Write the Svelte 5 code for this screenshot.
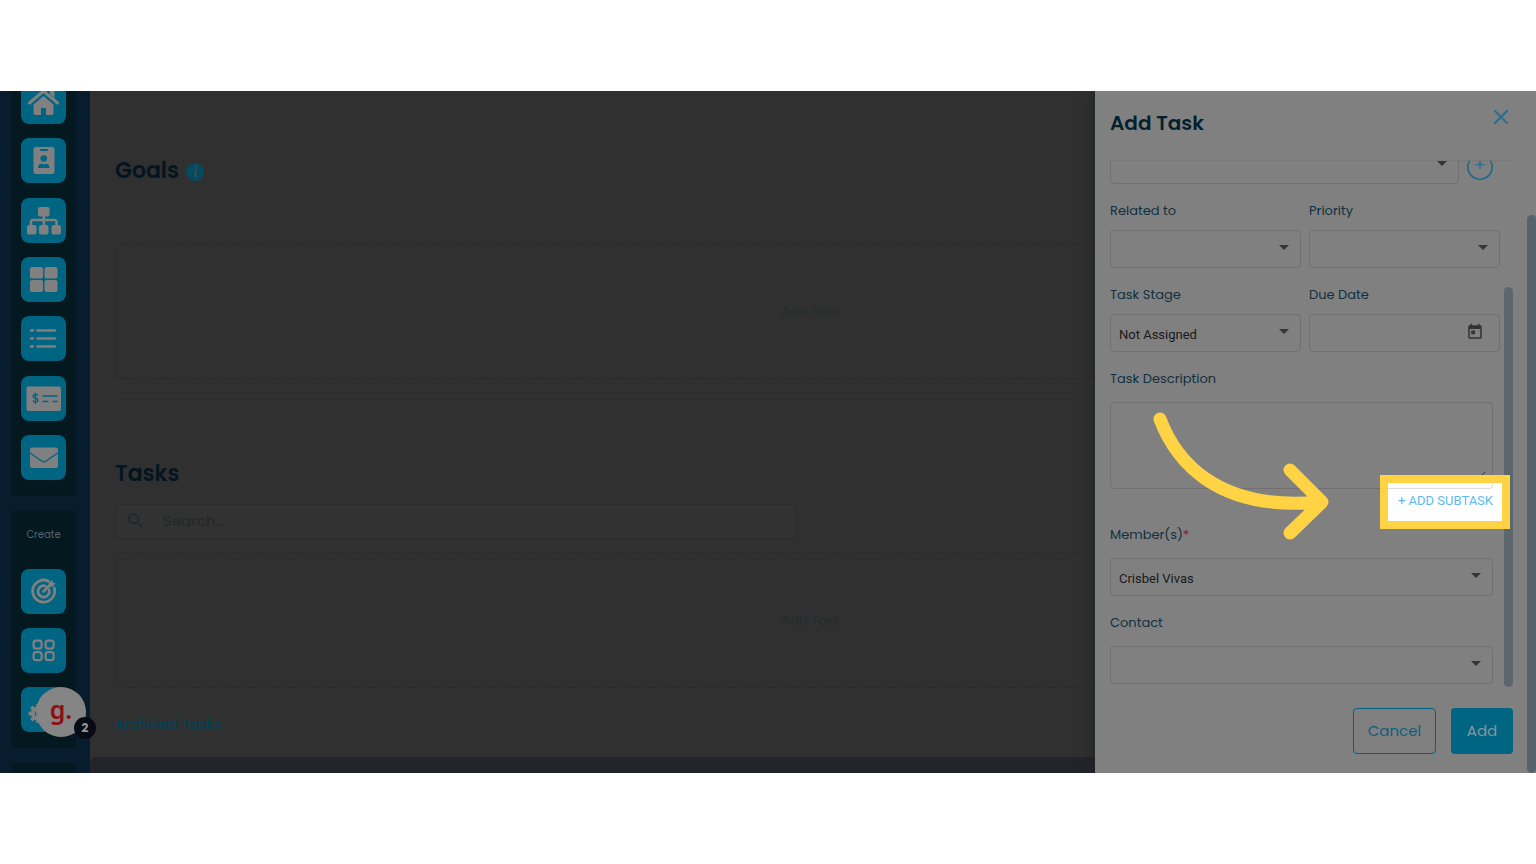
<script>
  const browse = ['home', 'badge', 'sitemap', 'grid', 'list', 'check', 'mail'];
  const create = ['target', 'apps', 'gear'];
  let stage = $state('Not Assigned');
  let member = $state('Crisbel Vivas');
</script>

{#snippet icon(name)}
  <svg viewBox="0 0 45 45" aria-hidden="true">
    {#if name === 'home'}
      <path d="M8.500 24 L22.500 12 L36.500 24" fill="none" stroke="currentColor" stroke-width="3" stroke-linecap="round" />
      <path d="M29 10h4.500v9L29 15z" fill="currentColor" />
      <path d="M12.500 25.500 22.500 17 32.500 25.500V34a2 2 0 0 1-2 2H25v-7h-5v7h-5.500a2 2 0 0 1-2-2z" fill="currentColor" />
    {:else if name === 'badge'}
      <rect x="12.500" y="9" width="21" height="27" rx="2" fill="currentColor" />
      <rect x="19" y="11" width="8" height="2" rx="1" fill="var(--tile)" />
      <circle cx="22.800" cy="20.500" r="3.300" fill="var(--tile)" />
      <path d="M17 30c0-4 3-5 5.800-3.500C25.600 25 28.500 26 28.500 30z" fill="var(--tile)" />
    {:else if name === 'sitemap'}
      <g fill="currentColor">
        <rect x="17" y="9" width="11.500" height="9.500" rx="2" />
        <rect x="6" y="27" width="9.500" height="9.500" rx="2" />
        <rect x="18" y="27" width="9.500" height="9.500" rx="2" />
        <rect x="30.500" y="27" width="9.500" height="9.500" rx="2" />
      </g>
      <path d="M10 27v-3q0-2 2-2h21.500q2 0 2 2v3M22.800 18v9" fill="none" stroke="currentColor" stroke-width="2.500" />
    {:else if name === 'grid'}
      <g fill="currentColor">
        <rect x="9" y="10" width="13" height="11.500" rx="2" />
        <rect x="23.500" y="10" width="13" height="11.500" rx="2" />
        <rect x="9" y="23" width="13" height="12" rx="2" />
        <rect x="23.500" y="23" width="13" height="12" rx="2" />
      </g>
    {:else if name === 'list'}
      <path d="M10 14.500h2M10 22.500h2M10 30.500h2M16.500 14.500h17.500M16.500 22.500h17.500M16.500 30.500h17.500" stroke="currentColor" stroke-width="2.600" stroke-linecap="round" />
    {:else if name === 'check'}
      <rect x="5.500" y="10.500" width="34.500" height="24.500" rx="2" fill="currentColor" />
      <path d="M17 19.500c-1-1.500-5-1.600-5 .7 0 2.600 5 1.400 5 4 0 2.200-4 2.200-5.200.4M14.400 16.500v11.500" fill="none" stroke="var(--tile)" stroke-width="1.300" />
      <path d="M21.500 20h15M21.500 25.500h6M31.500 25.500h5" stroke="var(--tile)" stroke-width="1.700" />
    {:else if name === 'mail'}
      <rect x="9" y="12.500" width="28" height="20.500" rx="2" fill="currentColor" />
      <path d="M8.500 17.500 20.500 26q2.300 1.600 4.600 0L37.500 17.500" fill="none" stroke="var(--tile)" stroke-width="1.500" />
    {:else if name === 'target'}
      <g fill="none" stroke="currentColor" stroke-width="2.800" stroke-linecap="round">
        <path d="M27.500 12.200A11 11 0 1 0 33.200 19" />
        <path d="M24.500 17A5.700 5.700 0 1 0 28.200 21" />
        <path d="M22.500 22.500 30 15" />
      </g>
      <path d="M27.500 14.500 31 11l1 2.500 2.800 1L31 18l-3-.5z" fill="currentColor" />
    {:else if name === 'apps'}
      <g fill="none" stroke="currentColor" stroke-width="2.200">
        <rect x="12.600" y="12.600" width="8" height="8" rx="2.500" />
        <rect x="24.600" y="12.600" width="8" height="8" rx="2.500" />
        <rect x="12.600" y="24.200" width="8" height="8" rx="2.500" />
        <rect x="24.600" y="24.200" width="8" height="8" rx="2.500" />
      </g>
    {:else}
      <circle cx="17" cy="26.500" r="5" fill="none" stroke="currentColor" stroke-width="4.500" />
      <path d="M17 17v19M7.500 26.500h19M10.300 19.800l13.400 13.400M23.700 19.800 10.300 33.200" stroke="currentColor" stroke-width="3.600" />
      <circle cx="17" cy="26.500" r="3" fill="var(--tile)" />
    {/if}
  </svg>
{/snippet}

{#snippet caret()}
  <svg class="caret" viewBox="0 0 10 5" aria-hidden="true"><path d="M0 0h10L5 5z" fill="#353535" /></svg>
{/snippet}

<div class="page">
  <div class="frame">
    <nav class="sidebar" aria-label="Main navigation">
      <div class="panel browse">
        <div class="tiles spread">
          {#each browse as name}
            <button class="tile" aria-label={name}>{@render icon(name)}</button>
          {/each}
        </div>
      </div>
      <div class="panel create">
        <span class="caption">Create</span>
        <div class="tiles">
          {#each create as name}
            <button class="tile" aria-label={name}>{@render icon(name)}</button>
          {/each}
        </div>
        <button class="helper"><span>g.</span><b>2</b></button>
      </div>
      <div class="panel rest"></div>
    </nav>

    <main>
      <section class="goals">
        <h2>Goals <i class="info">i</i></h2>
        <button class="drop">Add Goal</button>
      </section>
      <section class="tasks">
        <h2>Tasks</h2>
        <label class="search">
          <svg viewBox="0 0 16 16" aria-hidden="true"><path d="M10 10l5 5M11 6A5 5 0 1 1 1 6a5 5 0 0 1 10 0z" fill="none" stroke="currentColor" stroke-width="2" /></svg>
          <input type="text" placeholder="Search..." aria-label="Search tasks" />
        </label>
        <button class="drop">Add Task</button>
        <a href="#archived">Archived Tasks</a>
      </section>
      <footer></footer>
    </main>

    <aside class="drawer">
      <header>
        <h1>Add Task</h1>
        <button class="close" aria-label="Close">
          <svg viewBox="0 0 14 14"><path d="M0 0l14 14M14 0L0 14" stroke="currentColor" stroke-width="2" /></svg>
        </button>
      </header>

      <form>
        <div class="row">
          <div class="control"><select aria-label="Goal"><option></option></select>{@render caret()}</div>
          <button type="button" class="plus" aria-label="Add goal">
            <svg viewBox="0 0 26 26"><circle cx="13" cy="13" r="12.200" fill="none" stroke="#176985" stroke-width="1.500" /><path d="M13 6v9M8.500 10.500h9" stroke="currentColor" stroke-width="1.500" /></svg>
          </button>
        </div>
        <div class="pair">
          <div class="field">
            <label for="related">Related to</label>
            <div class="control"><select id="related"><option></option></select>{@render caret()}</div>
          </div>
          <div class="field">
            <label for="priority">Priority</label>
            <div class="control"><select id="priority"><option></option></select>{@render caret()}</div>
          </div>
          <div class="field">
            <label for="stage">Task Stage</label>
            <div class="control"><select id="stage" bind:value={stage}><option>Not Assigned</option></select>{@render caret()}</div>
          </div>
          <div class="field">
            <label for="due">Due Date</label>
            <div class="control">
              <input id="due" type="text" />
              <svg class="calendar" viewBox="0 0 24 24" aria-hidden="true"><path d="M19 3h-1V1h-2v2H8V1H6v2H5c-1.100 0-2 .9-2 2v14c0 1.100.9 2 2 2h14c1.100 0 2-.9 2-2V5c0-1.100-.9-2-2-2zm0 16H5V8h14v11zM7 10h5v5H7z" fill="currentColor" /></svg>
            </div>
          </div>
        </div>
        <div class="field wide">
          <label for="description">Task Description</label>
          <div class="control">
            <textarea id="description"></textarea>
            <svg class="grip" viewBox="0 0 14 14" aria-hidden="true"><path d="M12 0 0 12" stroke="#333" /></svg>
          </div>
        </div>
        <div class="subtask">
          <div class="spotlight"><span></span></div>
          <button type="button">+ ADD SUBTASK</button>
        </div>
        <div class="field wide">
          <label for="members">Member(s)<em>*</em></label>
          <div class="control"><select id="members" bind:value={member}><option>Crisbel Vivas</option></select>{@render caret()}</div>
        </div>
        <div class="field wide">
          <label for="contact">Contact</label>
          <div class="control"><select id="contact"><option></option></select>{@render caret()}</div>
        </div>
        <span class="thumb inner"></span>
      </form>

      <div class="actions">
        <button class="cancel">Cancel</button>
        <button class="add">Add</button>
      </div>

      <span class="thumb outer"></span>
      <svg class="arrow" viewBox="0 0 182 134" aria-hidden="true">
        <path d="M10 11C25 51 65 104 170 94M140 62l32 32-32 31" fill="none" stroke="#ffd344" stroke-width="13" stroke-linecap="round" stroke-linejoin="round" />
      </svg>
    </aside>
  </div>
</div>

<style>
  :global(body) { margin: 0; background: #fff; }
  * { box-sizing: border-box; }
  button, input, select, textarea { font: inherit; color: inherit; margin: 0; }
  button { padding: 0; border: 0; background: none; cursor: pointer; }
  svg { display: block; }

  .page {
    min-height: 100vh;
    padding: 91px 0;
    font-family: Poppins, Inter, sans-serif;
    font-size: 13px;
  }
  .frame {
    position: relative;
    display: flex;
    height: calc(100vh - 182px);
    min-height: 682px;
    overflow: hidden;
    background: #303030;
  }

  .sidebar {
    display: flex;
    flex-direction: column;
    gap: 15px;
    width: 90px;
    flex: none;
    padding: 0 14px 0 11px;
    background: #071d2d;
  }
  .panel { background: #04181f; padding: 0 10px; flex: none; }
  .browse { display: flow-root; height: 405px; }
  .create { position: relative; height: 237px; }
  .rest { flex: 1; }
  .tiles { display: flex; flex-direction: column; gap: 14px; }
  .spread { height: 401px; margin-top: -12px; justify-content: space-between; gap: 0; }
  .tile {
    --tile: #006483;
    width: 45px;
    height: 45px;
    border-radius: 8px;
    background: var(--tile);
    color: #808080;
  }
  .caption { display: block; padding: 14px 0 24px; line-height: 20px; font-size: 10px; text-align: center; color: #58656b; }
  .helper {
    position: absolute;
    left: 25px;
    top: 176px;
    width: 50px;
    height: 50px;
    border-radius: 50%;
    background: #858585;
    color: #900d16;
    font: 600 25px/44px "Noto Sans", sans-serif;
  }
  .helper span { display: block; height: 50px; }
  .helper b {
    position: absolute;
    left: 38px;
    top: 30px;
    width: 22px;
    height: 22px;
    border-radius: 50%;
    background: #070b16;
    color: #969696;
    font: 700 12px/22px Poppins, Inter, sans-serif;
  }

  main { flex: 1; display: flex; flex-direction: column; }
  section { padding: 0 29px 0 25px; }
  h2 { margin: 0; font-size: 22px; line-height: 32px; font-weight: 600; color: #03151f; }
  .goals { padding-top: 64px; height: 303px; }
  .goals::after { content: ""; display: block; margin-top: 14px; border-top: 1px solid #2b2c30; }
  .goals .drop { margin-top: 57px; }
  .tasks { padding-top: 64px; height: 363px; }
  .info {
    display: inline-block;
    width: 18px;
    height: 18px;
    margin-left: 2px;
    border-radius: 50%;
    background: #034b60;
    color: #3c4a4e;
    font: italic 700 16px/18px "Liberation Serif", serif;
    text-align: center;
    vertical-align: middle;
  }
  .drop {
    display: block;
    width: 100%;
    height: 135px;
    border: 1px dashed #272a2b;
    border-radius: 6px;
    color: #262b2d;
  }
  .search {
    display: flex;
    align-items: center;
    gap: 20px;
    width: 49%;
    height: 35px;
    margin: 14px 0;
    padding: 0 12px 2px;
    border: 1px solid #292b2c;
    border-radius: 4px;
    background: #323232;
    color: #222728;
    font-size: 15px;
  }
  .search svg { width: 15px; height: 15px; }
  .search input { flex: 1; border: 0; background: none; outline: none; padding: 0; }
  .search input::placeholder { color: #222728; opacity: 1; }
  .tasks a { display: inline-block; margin-top: 26px; line-height: 20px; font-size: 14px; font-weight: 500; color: #044156; text-decoration: none; }
  footer { flex: 1; background: #232429; border-radius: 6px 0 0 0; }

  .drawer {
    position: absolute;
    top: 0;
    right: 0;
    bottom: 0;
    width: 441px;
    padding: 0 23px 19px 15px;
    display: flex;
    flex-direction: column;
    background: #808080;
    box-shadow: 0 0 12px #1c1e21;
    color: #10303d;
  }
  .drawer header { display: flex; justify-content: space-between; align-items: flex-start; height: 70px; padding-top: 17px; border-bottom: 1px solid #797979; }
  h1 { margin: 0; font-size: 20px; line-height: 30px; font-weight: 600; color: #04202d; }
  .close { width: 14px; margin: 2px 5px 0 0; color: #286f92; }

  form { position: relative; flex: 1; padding-right: 13px; }
  .row { display: flex; gap: 8px; height: 23px; margin-bottom: 17px; align-items: flex-end; overflow: hidden; }
  .row .control { flex: 1; }
  .plus { width: 26px; height: 26px; margin: 0 7px 4px 0; color: #286f92; }
  .pair { display: grid; grid-template-columns: 1fr 1fr; column-gap: 8px; }
  .field { display: flex; flex-direction: column; gap: 9px; padding-bottom: 17px; }
  .wide { gap: 13px; padding-right: 7px; }
  label { line-height: 20px; }
  em { color: #8a1820; font-style: normal; }
  .control { position: relative; }
  select, .control input, textarea {
    display: block;
    width: 100%;
    height: 38px;
    padding: 2px 8px 0;
    border: 1px solid #707070;
    border-radius: 4px;
    background: transparent;
    color: #1a1a1a;
    font-family: Roboto, sans-serif;
    appearance: none;
    outline: none;
  }
  textarea { height: 87px; resize: none; }
  .caret { position: absolute; right: 12px; top: 15px; width: 10px; height: 5px; }
  .calendar { position: absolute; right: 16px; top: 9px; width: 18px; height: 18px; color: #333; }
  .grip { position: absolute; right: 6px; bottom: 3px; width: 14px; height: 14px; }
  .wide:has(textarea) { padding-bottom: 0; }
  .subtask { position: relative; z-index: 1; display: flex; justify-content: flex-end; height: 36px; padding-right: 7px; }
  .subtask button { position: relative; height: 24px; line-height: 24px; font-family: Roboto, sans-serif; color: #62b9f0; }
  .spotlight {
    position: absolute;
    right: -10px;
    top: -14px;
    width: 130px;
    height: 54px;
    border: 8px solid #ffd344;
    background: #fff;
  }
  .spotlight span { display: block; width: 105px; height: 6px; border: solid #ddd; border-width: 0 1px 1px 0; border-radius: 0 0 4px 0; }
  .thumb { position: absolute; background: #5c676d; border-radius: 5px; width: 9px; }
  .inner { right: 0; top: 126px; height: 400px; }
  .outer { right: 0; top: 124px; bottom: 0; background: #55626d; }

  .actions { display: flex; justify-content: flex-end; gap: 15px; font-size: 15px; }
  .actions button { height: 46px; padding-bottom: 1px; border-radius: 4px; }
  .cancel { width: 83px; border: 1px solid #006483; color: #0b6080; }
  .actions .add { width: 62px; background: #006483; color: #8b9498; }
  .arrow { position: absolute; z-index: 2; left: 55px; top: 317px; width: 182px; height: 134px; }
</style>
